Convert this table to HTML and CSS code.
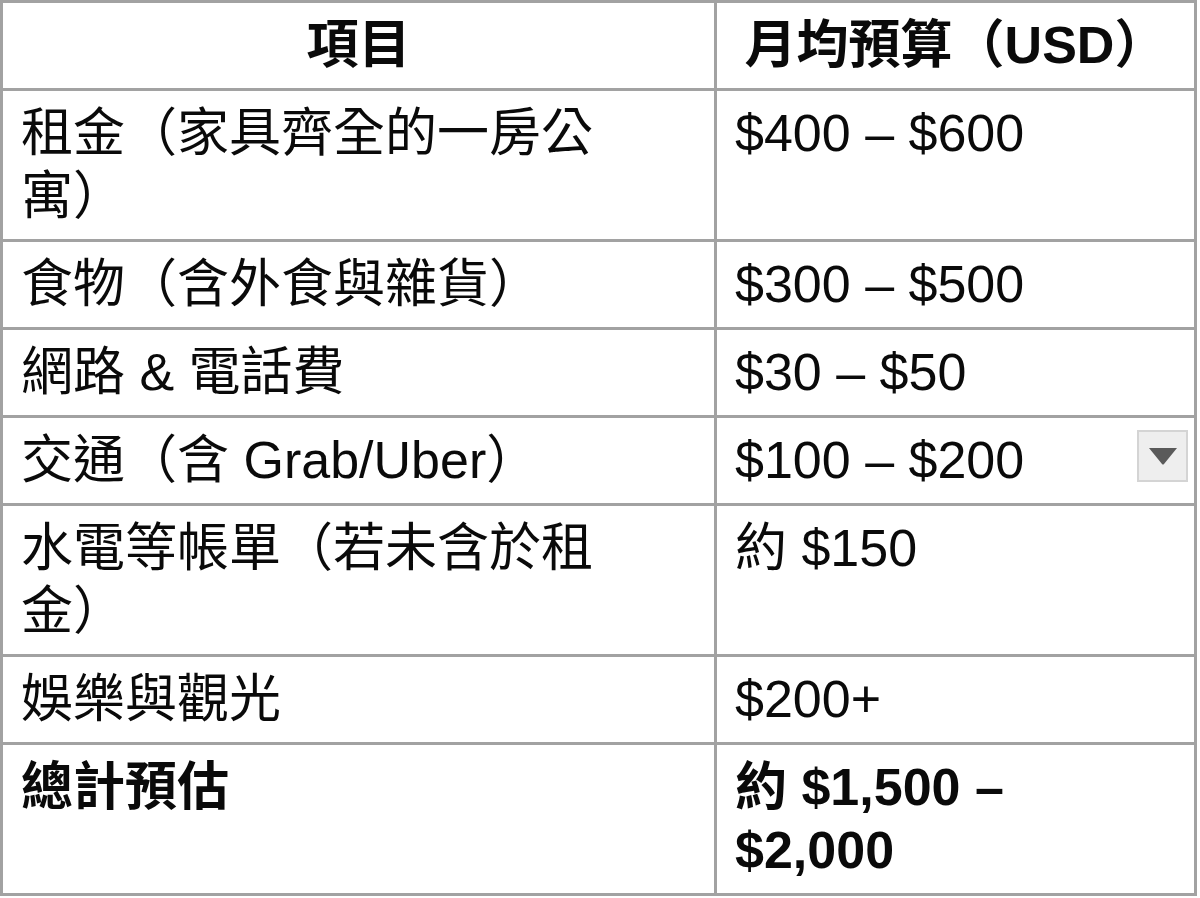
FILE: index.html
```html
<!DOCTYPE html>
<html lang="zh-Hant">
<head>
<meta charset="utf-8">
<title>預算表</title>
<link rel="stylesheet" href="styles.css">
</head>
<body>
<div class="budget">
  <div class="cell head">項目</div>
  <div class="cell head">月均預算（USD）</div>

  <div class="cell">租金（家具齊全的一房公寓）</div>
  <div class="cell">$400 – $600</div>

  <div class="cell">食物（含外食與雜貨）</div>
  <div class="cell">$300 – $500</div>

  <div class="cell">網路 &amp; 電話費</div>
  <div class="cell">$30 – $50</div>

  <div class="cell">交通（含 Grab/Uber）</div>
  <div class="cell with-menu">$100 – $200<span class="dropdown" aria-hidden="true"><svg viewBox="0 0 30 18" width="30" height="18"><path d="M1 1 L29 1 L16 17 Q15 18 14 17 Z" fill="#5a5a5a"/></svg></span></div>

  <div class="cell">水電等帳單（若未含於租金）</div>
  <div class="cell">約 $150</div>

  <div class="cell">娛樂與觀光</div>
  <div class="cell">$200+</div>

  <div class="cell total">總計預估</div>
  <div class="cell total">約 $1,500 – $2,000</div>
</div>
</body>
</html>
```

FILE: styles.css
```css
html, body {
  margin: 0;
  padding: 0;
  background: #ffffff;
}

body {
  font-family: "Liberation Sans", "Noto Sans CJK TC", "Noto Sans CJK SC", sans-serif;
  font-size: 52px;
  color: #0a0a0a;
  text-spacing-trim: space-all;
  font-kerning: none;
}

.budget {
  display: grid;
  grid-template-columns: 711px 477px;
  gap: 3px;
  padding: 3px;
  width: 1191px;
  background: #a2a2a2;
}

.cell {
  background: #ffffff;
  padding: 11px 40px 11px 18px;
  line-height: 63px;
  min-height: 63px;
}

.head {
  font-weight: 700;
  text-align: center;
  white-space: nowrap;
  padding: 11px 0;
}

.total {
  font-weight: 700;
}

.with-menu {
  position: relative;
}

.dropdown {
  position: absolute;
  top: 12px;
  right: 6px;
  width: 47px;
  height: 48px;
  background: #eeeeee;
  border: 2px solid #d4d4d4;
  display: flex;
  align-items: center;
  justify-content: center;
}

.dropdown svg {
  display: block;
}
```
